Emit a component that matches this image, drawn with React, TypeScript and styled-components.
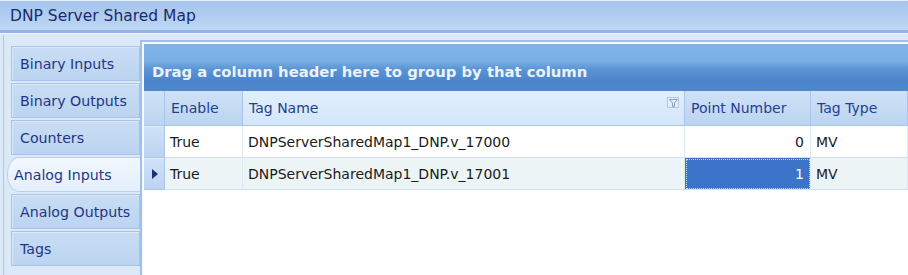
import styled, { createGlobalStyle } from 'styled-components'

const GlobalStyle = createGlobalStyle`
  html, body {
    margin: 0;
    padding: 0;
    background: #dce9f8;
  }
  body {
    font-family: 'DejaVu Sans', 'Liberation Sans', sans-serif;
  }
`

interface Row {
  enable: string
  tagName: string
  point: number
  tagType: string
}

const tabs = ['Binary Inputs', 'Binary Outputs', 'Counters', 'Analog Inputs', 'Analog Outputs', 'Tags']
const selectedTab = 'Analog Inputs'

const rows: Row[] = [
  { enable: 'True', tagName: 'DNPServerSharedMap1_DNP.v_17000', point: 0, tagType: 'MV' },
  { enable: 'True', tagName: 'DNPServerSharedMap1_DNP.v_17001', point: 1, tagType: 'MV' },
]

const FilterIcon = () => (
  <FilterButton>
    <svg width="9" height="8" viewBox="0 0 9 8">
      <path d="M0.5 0.5 H8.5 L5.5 4 V7.5 H3.5 V4 Z" fill="none" stroke="#8aa0bd" strokeWidth="1" />
    </svg>
  </FilterButton>
)

const App = () => {
  return (
    <>
      <GlobalStyle />
      <Window>
        <TitleBar>DNP Server Shared Map</TitleBar>
        <Divider />
        <Body>
          <TabList>
            {tabs.map((t) => (
              <Tab key={t} selected={t === selectedTab}>
                {t}
              </Tab>
            ))}
          </TabList>
          <Grid>
            <GroupPanel>Drag a column header here to group by that column</GroupPanel>
            <Table>
              <HeaderCell />
              <HeaderCell>Enable</HeaderCell>
              <HeaderCell hot>
                Tag Name
                <FilterIcon />
              </HeaderCell>
              <HeaderCell>Point Number</HeaderCell>
              <HeaderCell>Tag Type</HeaderCell>
              {rows.map((r, i) => {
                const focused = i === rows.length - 1
                return [
                  <Indicator key={`ind${i}`}>{focused && <Arrow />}</Indicator>,
                  <Cell key={`en${i}`} alt={i % 2 === 1}>
                    {r.enable}
                  </Cell>,
                  <Cell key={`tn${i}`} alt={i % 2 === 1}>
                    {r.tagName}
                  </Cell>,
                  <Cell key={`pn${i}`} alt={i % 2 === 1} right focused={focused}>
                    {r.point}
                  </Cell>,
                  <Cell key={`tt${i}`} alt={i % 2 === 1}>
                    {r.tagType}
                  </Cell>,
                ]
              })}
            </Table>
          </Grid>
        </Body>
      </Window>
    </>
  )
}

const Window = styled.div`
  width: 908px;
  height: 275px;
  overflow: hidden;
  display: flex;
  flex-direction: column;
  background: #dce9f8;
`

const TitleBar = styled.div`
  height: 30px;
  box-sizing: border-box;
  padding: 0 0 0 10px;
  display: flex;
  align-items: center;
  font-size: 15.5px;
  color: #1b2a6b;
  border-top: 1px solid #e4eefb;
  background: linear-gradient(to bottom, #a4c4ec 0%, #b2cff1 60%, #bdd7f4 100%);
`

const Divider = styled.div`
  height: 3px;
  background: #93b5e3;
  border-bottom: 1px solid #f4f8fd;
`

const Body = styled.div`
  flex: 1;
  display: flex;
  border-left: 1px solid #a9c6ec;
  margin-left: 3px;
  margin-top: 1px;
`

const TabList = styled.div`
  width: 136px;
  flex-shrink: 0;
  padding: 11px 0 0 7px;
  box-sizing: border-box;
  display: flex;
  flex-direction: column;
  gap: 2px;
  background: #dce9f8;
`

const Tab = styled.div<{ selected?: boolean }>`
  height: 35px;
  box-sizing: border-box;
  margin-left: ${({ selected }) => (selected ? '-4px' : '0')};
  margin-right: ${({ selected }) => (selected ? '-1px' : '0')};
  padding-left: ${({ selected }) => (selected ? '6px' : '8px')};
  display: flex;
  align-items: center;
  font-size: 14.2px;
  color: #1f3687;
  white-space: nowrap;
  overflow: hidden;
  border: 1px solid ${({ selected }) => (selected ? '#b8d0ee' : '#a7c3e9')};
  border-right: ${({ selected }) => (selected ? 'none' : '1px solid #a7c3e9')};
  border-radius: ${({ selected }) => (selected ? '12px 0 0 12px / 18px 0 0 18px' : '0')};
  background: ${({ selected }) =>
    selected
      ? 'linear-gradient(to bottom, #f1f7fe 0%, #e4effc 100%)'
      : 'linear-gradient(to bottom, #c9ddf4 0%, #bcd4f1 100%)'};
  box-shadow: ${({ selected }) => (selected ? 'none' : 'inset 1px 1px 0 #dbe8f8')};
`

const Grid = styled.div`
  flex: 1;
  margin-top: 5px;
  border-left: 2px solid #a1c0e9;
  border-top: 2px solid #a1c0e9;
  padding: 2px 0 0 2px;
  background: #ffffff;
  box-shadow: inset 1px 1px 0 #f4f8fd;
  display: flex;
  flex-direction: column;
`

const GroupPanel = styled.div`
  height: 47px;
  box-sizing: border-box;
  padding: 7px 0 0 8px;
  display: flex;
  align-items: center;
  font-size: 14.8px;
  font-weight: bold;
  color: #eaf3fd;
  white-space: nowrap;
  background: linear-gradient(
    to bottom,
    #80b5e8 0%,
    #78afe4 35%,
    #5a93d4 55%,
    #4a83ca 80%,
    #4f88cd 100%
  );
`

const Table = styled.div`
  display: grid;
  grid-template-columns: 21px 78px 442px 126px 1fr;
  grid-auto-rows: 32px;
  grid-template-rows: 35px;
`

const HeaderCell = styled.div<{ hot?: boolean }>`
  position: relative;
  display: flex;
  align-items: center;
  padding-left: 6px;
  font-size: 14px;
  color: #233f91;
  white-space: nowrap;
  border-right: 1px solid #a9c6ea;
  border-bottom: 1px solid #a9c6ea;
  box-sizing: border-box;
  background: ${({ hot }) =>
    hot
      ? 'linear-gradient(to bottom, #e2effc 0%, #d3e6fa 100%)'
      : 'linear-gradient(to bottom, #cfe1f7 0%, #bcd4f1 100%)'};
`

const FilterButton = styled.span`
  position: absolute;
  right: 5px;
  top: 6px;
  width: 12px;
  height: 11px;
  box-sizing: border-box;
  border: 1px solid #b5c8e0;
  background: #e4eef9;
  display: flex;
  align-items: center;
  justify-content: center;
`

const Indicator = styled.div`
  display: flex;
  align-items: center;
  justify-content: center;
  border-right: 1px solid #a9c6ea;
  border-bottom: 1px solid #a9c6ea;
  box-sizing: border-box;
  background: linear-gradient(to bottom, #cfe1f7 0%, #bcd4f1 100%);
  box-shadow: inset 0 1px 0 #e3eefb;
`

const Arrow = styled.span`
  width: 0;
  height: 0;
  border-top: 5px solid transparent;
  border-bottom: 5px solid transparent;
  border-left: 6px solid #1c2f78;
  margin-left: 1px;
`

const Cell = styled.div<{ alt?: boolean; right?: boolean; focused?: boolean }>`
  display: flex;
  align-items: center;
  justify-content: ${({ right }) => (right ? 'flex-end' : 'flex-start')};
  padding: ${({ right }) => (right ? '0 6px 0 0' : '0 0 0 5px')};
  font-size: 14px;
  color: ${({ focused }) => (focused ? '#ffffff' : '#1a1a1a')};
  white-space: nowrap;
  box-sizing: border-box;
  border-right: 1px solid #dbe8f6;
  border-bottom: 1px solid #cfe0f3;
  background: ${({ alt, focused }) => (focused ? '#3b74c9' : alt ? '#edf4f6' : '#ffffff')};
  outline: ${({ focused }) => (focused ? '1px dotted #c9d9f0' : 'none')};
  outline-offset: -2px;
`

export default App
